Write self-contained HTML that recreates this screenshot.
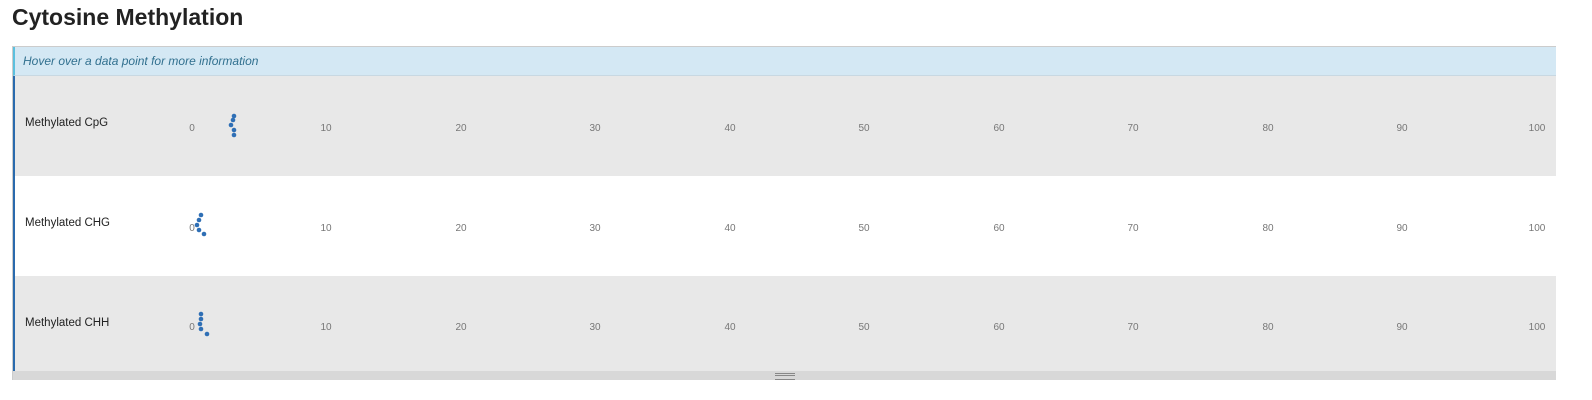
<!DOCTYPE html>
<html><head><style>
body{margin:0;background:#fff;width:1592px;height:400px;overflow:hidden;font-family:"Liberation Sans",sans-serif;}
h1{position:absolute;left:12px;top:4px;margin:0;font-size:23px;font-weight:bold;color:#222;}
.box{position:absolute;left:12px;top:46px;width:1544px;height:334px;border:1px solid #ccc;box-sizing:border-box;}
.hdr{position:absolute;left:0;top:0;width:1543px;height:29px;background:#d4e8f4;border-left:2px solid #5bc0de;box-sizing:border-box;border-bottom:1px solid #c8d8e2;}
.hdr span{position:absolute;left:8px;top:7px;font-size:12px;font-style:italic;color:#31708f;}
.row{position:absolute;left:0;width:1543px;border-left:2px solid #2a6aad;box-sizing:border-box;}
.lbl{position:absolute;left:11px;font-size:11.5px;color:#222;}
.ax{position:absolute;font-size:10px;color:#777;transform:translateX(-50%);}
.foot{position:absolute;left:0;top:324px;width:1543px;height:9px;background:#d8d8d8;}
.grip{position:absolute;left:762px;top:2px;width:20px;height:5px;border-top:1px solid #888;border-bottom:1px solid #888;}
.grip:after{content:"";position:absolute;left:0;top:1px;width:20px;height:1px;background:#888;}
</style></head><body>
<h1>Cytosine Methylation</h1>
<div class="box">
<div class="hdr"><span>Hover over a data point for more information</span></div>
<div class="row" style="top:29px;height:100px;background:#e8e8e8"></div>
<div class="row" style="top:129px;height:100px;background:#fff"></div>
<div class="row" style="top:229px;height:95px;background:#e8e8e8"></div>
<div class="foot"><div class="grip"></div></div>
</div>
<div class="lbl" style="top:117px;left:25px;position:absolute">Methylated CpG</div>
<div class="lbl" style="top:217px;left:25px;position:absolute">Methylated CHG</div>
<div class="lbl" style="top:317px;left:25px;position:absolute">Methylated CHH</div>
<svg width="1592" height="400" style="position:absolute;left:0;top:0" font-family="Liberation Sans, sans-serif" font-size="10" fill="#777">
<g text-anchor="middle">
<text x="192" y="131">0</text><text x="326" y="131">10</text><text x="461" y="131">20</text><text x="595" y="131">30</text><text x="730" y="131">40</text><text x="864" y="131">50</text><text x="999" y="131">60</text><text x="1133" y="131">70</text><text x="1268" y="131">80</text><text x="1402" y="131">90</text><text x="1537" y="131">100</text>
<text x="192" y="231">0</text><text x="326" y="231">10</text><text x="461" y="231">20</text><text x="595" y="231">30</text><text x="730" y="231">40</text><text x="864" y="231">50</text><text x="999" y="231">60</text><text x="1133" y="231">70</text><text x="1268" y="231">80</text><text x="1402" y="231">90</text><text x="1537" y="231">100</text>
<text x="192" y="330">0</text><text x="326" y="330">10</text><text x="461" y="330">20</text><text x="595" y="330">30</text><text x="730" y="330">40</text><text x="864" y="330">50</text><text x="999" y="330">60</text><text x="1133" y="330">70</text><text x="1268" y="330">80</text><text x="1402" y="330">90</text><text x="1537" y="330">100</text>
</g>
<g fill="#2f6fb5">
<circle cx="234" cy="116" r="2.3"/><circle cx="233" cy="120" r="2.3"/><circle cx="231" cy="125" r="2.3"/><circle cx="234" cy="130" r="2.3"/><circle cx="234" cy="135" r="2.3"/>
<circle cx="201" cy="215" r="2.3"/><circle cx="199" cy="220" r="2.3"/><circle cx="197" cy="225" r="2.3"/><circle cx="199" cy="230" r="2.3"/><circle cx="204" cy="234" r="2.3"/>
<circle cx="201" cy="314" r="2.3"/><circle cx="201" cy="319" r="2.3"/><circle cx="200" cy="324" r="2.3"/><circle cx="201" cy="329" r="2.3"/><circle cx="207" cy="334" r="2.3"/>
</g>
</svg>
</body></html>
